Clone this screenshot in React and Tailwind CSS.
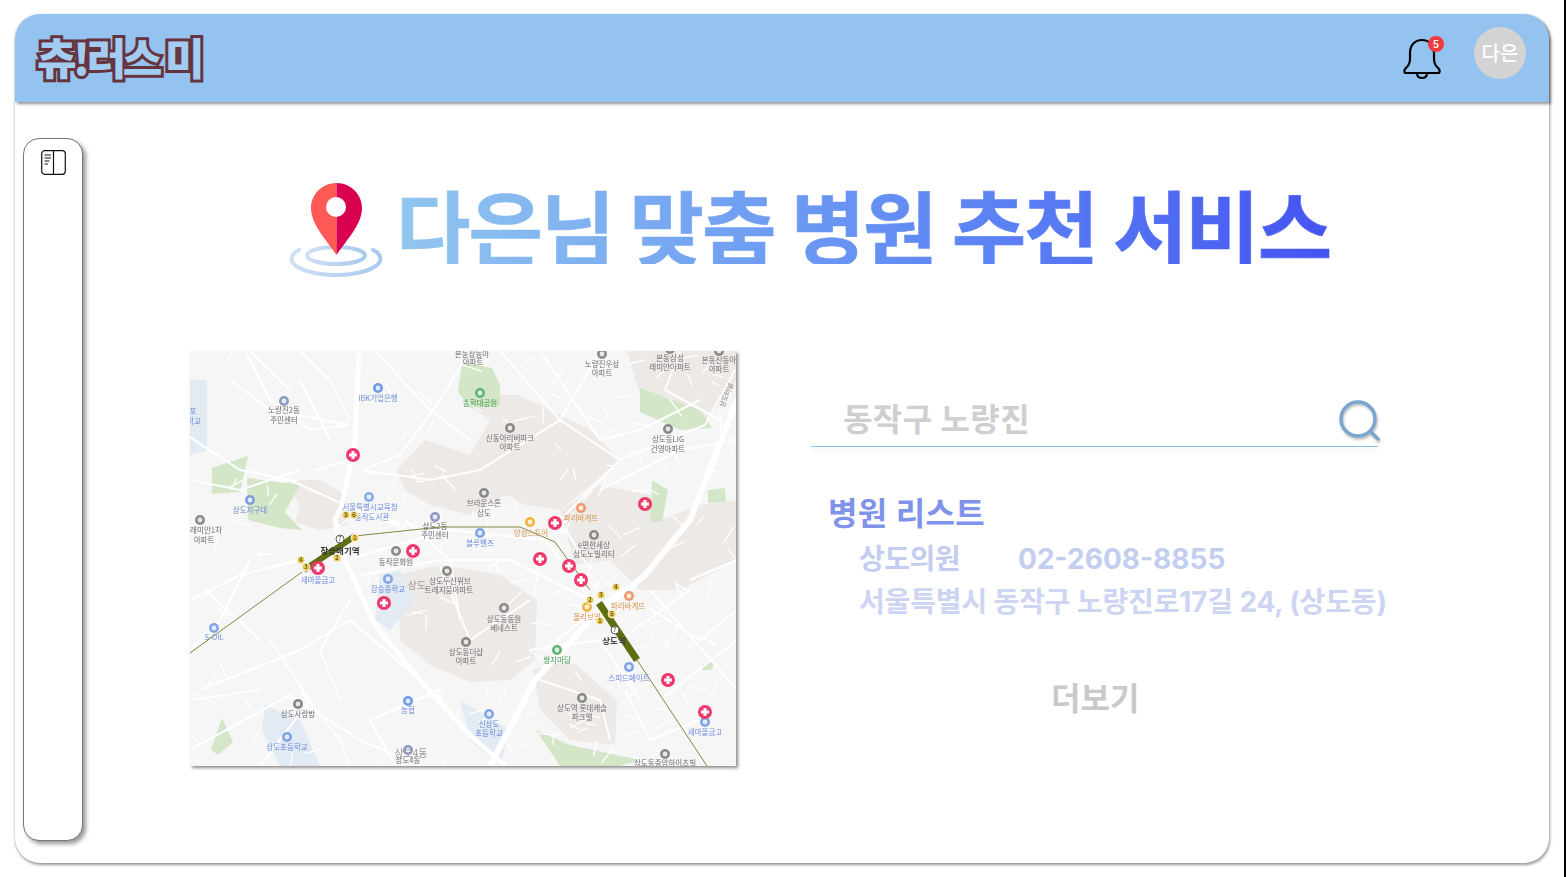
import React from "react";

const KR = '"Noto Sans CJK KR", sans-serif';
const blue = "#6f8cdc", gray = "#6e6e72", orange = "#d99350", green = "#3f9c52";

const labels = [
  ["노량진2동", 284, 410, gray], ["주민센터", 284, 420, gray],
  ["IBK기업은행", 378, 398, blue], ["포", 193, 411, blue], ["학교", 194, 421, blue],
  ["상도지구대", 250, 510, blue], ["서울특별시교육청", 370, 507, blue], ["동작도서관", 372, 517, blue],
  ["상도2동", 435, 526, gray], ["주민센터", 435, 535, gray],
  ["래미안1차", 206, 530, gray], ["아파트", 204, 540, gray],
  ["동작문화원", 396, 562, gray], ["새마을금고", 318, 580, blue], ["장승중학교", 388, 589, blue],
  ["상도두산위브", 450, 581, gray], ["트레지움아파트", 449, 590, gray],
  ["S-OIL", 214, 637, blue], ["상도사랑방", 298, 714, gray], ["상도초등학교", 287, 747, blue],
  ["농협", 408, 710, blue], ["상도4동", 408, 760, gray],
  ["상도동동원", 504, 619, gray], ["베네스트", 504, 628, gray],
  ["상도동더샵", 466, 652, gray], ["아파트", 466, 661, gray],
  ["쌍지마당", 557, 660, green], ["상도역 롯데캐슬", 582, 708, gray], ["파크엘", 582, 717, gray],
  ["신상도", 489, 724, blue], ["초등학교", 489, 733, blue],
  ["상도동중앙하이츠빌", 665, 763, gray], ["새마을금고", 705, 732, blue],
  ["스피드메이트", 629, 678, blue], ["올리브영", 587, 617, orange],
  ["파리바게뜨", 628, 606, orange], ["파리바게뜨", 581, 518, orange],
  ["e편한세상", 594, 545, gray], ["상도노빌리티", 594, 554, gray],
  ["블루핸즈", 480, 543, blue], ["양성스토어", 531, 533, orange],
  ["브라운스톤", 484, 503, gray], ["상도", 484, 513, gray],
  ["신동아리버파크", 510, 438, gray], ["아파트", 510, 447, gray],
  ["송학대공원", 480, 403, green], ["상도동LIG", 668, 439, gray], ["건영아파트", 668, 449, gray],
  ["노량진우성", 602, 364, gray], ["아파트", 602, 373, gray],
  ["본동삼성", 670, 358, gray], ["래미안아파트", 670, 367, gray],
  ["본동신동아", 719, 360, gray], ["아파트", 719, 369, gray],
  ["본동상동아", 472, 354, gray], ["아파트", 473, 362, gray],
];

const pins = [[353,455],[413,551],[318,568],[384,603],[555,523],[645,504],[540,559],[569,566],[581,580],[668,680],[705,712]];
const icons = [
  [284,401,"#8c9bc0"],[378,388,"#6f9be8"],[250,500,"#7c9fd8"],[369,497,"#85aee8"],[435,517,"#8c9bc0"],
  [200,520,"#8a8a8a"],[396,551,"#8a8a8a"],[388,579,"#85a5e8"],[447,571,"#8a8a8a"],[214,628,"#85a5e8"],
  [298,704,"#8a8580"],[287,737,"#7ea4e8"],[408,701,"#6f9be8"],[408,750,"#8c9bc0"],[504,608,"#8a8a8a"],
  [466,642,"#8a8a8a"],[557,650,"#5fb56f"],[582,698,"#8a8a8a"],[489,714,"#85a5e8"],[665,754,"#8a8a8a"],
  [705,722,"#7ea4e8"],[629,667,"#7ea4e8"],[587,607,"#f0b43c"],[629,596,"#ee9a6c"],[581,508,"#ee9a6c"],
  [594,535,"#8a8a8a"],[480,533,"#7ea4e8"],[530,522,"#f0b43c"],[484,493,"#8a8a8a"],[510,428,"#8a8a8a"],
  [480,393,"#5fb56f"],[668,429,"#8a8a8a"],[602,354,"#8a8a8a"],[670,349,"#8a8a8a"],[719,351,"#8a8a8a"],
];
const stations = [
  ["5",346,515,"#e8c64a"],["6",354,515,"#e8c64a"],["7",340,539,"#fff"],["1",355,538,"#e8c64a"],["2",337,558,"#e8c64a"],
  ["4",301,560,"#e8c64a"],["3",306,567,"#e8c64a"],["4",616,587,"#e8c64a"],["3",601,595,"#e8c64a"],["2",590,600,"#e8c64a"],
  ["5",612,614,"#e8c64a"],["1",600,621,"#e8c64a"],["7",615,630,"#fff"],
];
const beige = [
  "283,480 320,480 345,495 347,525 320,530 295,522 300,505",
  "397,470 425,440 470,455 490,420 530,400 590,430 620,460 585,490 560,510 525,505 505,495 470,515 430,505 405,490",
  "460,400 490,395 520,395 560,420 540,430 490,420",
  "627,351 737,351 737,380 705,425 665,420 640,395",
  "560,510 600,485 650,495 660,520 610,560 575,565",
  "397,575 440,565 500,575 537,600 535,660 510,680 470,682 430,665 400,640",
  "533,670 570,660 617,700 615,745 570,740 540,710",
  "610,560 660,520 700,505 737,500 737,560 680,590 640,590",
];
const parks = [
  "462,362 492,368 500,385 500,406 470,408 458,392",
  "212,468 248,456 240,492 212,494",
  "247,478 300,485 285,512 302,530 280,528 248,520",
  "640,388 700,410 712,428 680,430 640,412",
  "652,480 668,490 662,522 650,522",
  "708,490 725,488 726,502 708,503",
  "211,750 222,718 233,742 218,755",
  "536,730 570,745 640,760 620,766 560,766",
  "702,664 714,662 712,670 703,670",
];
const water = [
  "190,380 207,380 207,450 190,455",
  "380,575 400,570 415,600 390,630 375,620",
  "265,705 300,720 320,766 280,766 262,730",
  "460,700 510,730 500,766 470,740",
];
const thick = [
  "359,351 355,440 342,505",
  "342,505 335,520 345,560 375,625 420,680 470,735 505,766",
  "490,766 535,680 590,620 645,575 690,520 737,400",
  "340,505 400,525",
];
const thin = [
  "190,437 240,470 290,480 345,505","190,480 240,490 300,470","190,600 240,575 300,560","250,560 220,620 190,650",
  "245,351 270,400 310,430 350,425","300,351 330,380 350,420","230,380 270,410 350,425","315,470 350,460",
  "375,351 430,410 470,440","470,351 440,400 400,455 362,470","362,470 430,480 480,470 560,420 600,351","500,351 560,420 620,460 705,425 735,370",
  "360,575 440,560 510,560 590,600","345,560 450,530 545,540 590,600","540,351 600,440 640,430 700,400","620,460 560,520 590,570",
  "600,490 680,450 737,440","200,690 300,650 350,620 420,680","190,750 290,695 360,740 420,766","300,690 340,740 350,766",
  "395,766 370,720 440,690","545,650 620,590 700,640 737,610","650,590 737,690","620,640 690,590","660,700 737,640","625,690 650,740 700,720",
  "530,650 600,640 640,700","610,740 600,700 540,680","440,566 470,640 530,600","405,520 450,560 460,620","350,600 320,650 340,700","270,640 310,700 260,766",
  "190,700 260,690","300,380 330,440","680,351 665,390 720,420","690,580 737,560","250,351 290,390","205,590 260,640",
];

const streets = [];
let seed = 7;
const rnd = () => { seed = (seed * 16807) % 2147483647; return seed / 2147483647; };
for (let i = 0; i < 210; i++) {
  const x = 190 + rnd() * 547;
  const y = 351 + rnd() * 415;
  const a = rnd() * Math.PI;
  const l = 8 + rnd() * 14;
  const inEmpty = x < 340 && y > 360 && y < 460 || x > 225 && x < 390 && y > 590 && y < 680;
  if (!inEmpty) streets.push([x, y, x + Math.cos(a) * l, y + Math.sin(a) * l]);
}

function MapPic() {
  return (
    <svg viewBox="190 351 546 415" className="block w-[546px] h-[415px] bg-[#f6f6f7] shadow-[2px_2px_3px_rgba(0,0,0,0.45)] blur-[0.35px]" style={{ fontFamily: KR }}>
      {beige.map((p, i) => <polygon key={i} points={p} fill="#ede9e6" />)}
      {parks.map((p, i) => <polygon key={i} points={p} fill="#d4e6c8" />)}
      {water.map((p, i) => <polygon key={i} points={p} fill="#e2ebf4" />)}
      {streets.map(([a, b, c, d], i) => <line key={i} x1={a} y1={b} x2={c} y2={d} stroke="#fff" strokeWidth="1.300" />)}
      {thin.map((p, i) => <polyline key={i} points={p} fill="none" stroke="#fff" strokeWidth="2" />)}
      {thick.map((p, i) => <polyline key={i} points={p} fill="none" stroke="#fff" strokeWidth={i === 2 ? 6 : 5} />)}
      <polyline points="190,653 302,572" fill="none" stroke="#7d8b3f" strokeWidth="1" />
      <polyline points="355,536 440,527 520,527 555,542 590,590" fill="none" stroke="#7d8b3f" strokeWidth="1" />
      <polyline points="637,660 707,766" fill="none" stroke="#7d8b3f" strokeWidth="1" />
      <polyline points="304,570 355,536" fill="none" stroke="#5e6f10" strokeWidth="6" />
      <polyline points="599,603 637,660" fill="none" stroke="#5e6f10" strokeWidth="7" />
      {icons.map(([x, y, c], i) => (
        <g key={i}><circle cx={x} cy={y} r="5" fill={c} /><circle cx={x} cy={y} r="2.400" fill="#fff" opacity="0.8" /></g>
      ))}
      {labels.map(([t, x, y, c], i) => (
        <text key={i} x={x} y={y + 2.500} fill={c} fontSize="7.500" textAnchor="middle">{t}</text>
      ))}
      <text x="340" y="554" fill="#333" fontSize="8.500" fontWeight="700" textAnchor="middle">장승배기역</text>
      <text x="614" y="644" fill="#444" fontSize="8.500" fontWeight="700" textAnchor="middle">상도역</text>
      <text x="417" y="589" fill="#999" fontSize="10" textAnchor="middle">상도</text>
      <text x="411" y="757" fill="#999" fontSize="10" textAnchor="middle">상도4동</text>
      <text x="726" y="398" fill="#888" fontSize="7" textAnchor="middle" transform="rotate(-68 726 395)">상도터널</text>
      {stations.map(([n, x, y, c], i) => (
        <g key={i}><circle cx={x} cy={y} r="4" fill={c} stroke={c === "#fff" ? "#333" : "#fff"} strokeWidth="0.800" /><text x={x} y={y + 2} fontSize="6" textAnchor="middle" fill="#333">{n}</text></g>
      ))}
      {pins.map(([x, y], i) => (
        <g key={i}>
          <circle cx={x} cy={y} r="7" fill="#f0386b" />
          <path d={`M${x - 1.500} ${y - 4}h3v2.500h2.500v3h-2.500v2.500h-3v-2.500h-2.500v-3h2.500z`} fill="#fff" />
        </g>
      ))}
    </svg>
  );
}

function Pin() {
  return (
    <svg viewBox="285 180 100 100" className="w-[100px] h-[100px] shrink-0">
      <defs>
        <linearGradient id="ring" x1="0" x2="1" y1="0" y2="0">
          <stop offset="0" stopColor="#cfe0f4" />
          <stop offset="1" stopColor="#a9c8ee" />
        </linearGradient>
      </defs>
      <ellipse cx="336" cy="255.500" rx="29" ry="8.500" fill="none" stroke="url(#ring)" strokeWidth="4" />
      <path d="M299 250c-7 3-8 8-7 11 3 8 22 14 44 14s41-6 44-14c1-3 0-8-7-11" fill="none" stroke="url(#ring)" strokeWidth="4" strokeLinecap="round" />
      <path d="M336.500 183c-14 0-25.500 11-25.500 25 0 16 14 30 25.500 47z" fill="#ff5a55" />
      <path d="M336.500 183c14 0 25.500 11 25.500 25 0 16-14 30-25.500 47z" fill="#d8004f" />
      <circle cx="336" cy="207" r="10" fill="#fff" />
    </svg>
  );
}

export default function App() {
  return (
    <div className="w-[1566px] h-[877px] bg-white overflow-hidden flex" style={{ fontFamily: 'Inter, "Noto Sans CJK KR", sans-serif' }}>
      <div className="flex-1 pt-[14px] pl-[15px]">
        <div className="w-[1534px] h-[849px] rounded-[25px] bg-white flex flex-col shadow-[1px_2px_3px_rgba(0,0,0,0.4),-1px_0_2px_rgba(0,0,0,0.1)]">
          <header className="h-[88px] shrink-0 rounded-t-[25px] bg-[#94c3ef] shadow-[2px_2px_3px_rgba(0,0,0,0.42)] flex items-center justify-between pl-[22px] pr-[23px]">
            <div className="text-[43px] leading-none font-black text-[#a3ccf1] tracking-[-3.500px] [-webkit-text-stroke:6px_#66343f] [paint-order:stroke_fill] mt-[-4px]" style={{ fontFamily: KR }}>
              츄!러스 미
            </div>
            <div className="flex items-center gap-[32px] mt-[-10px]">
              <div className="relative w-[40px] h-[44px] mt-[10px]">
                <svg viewBox="0 0 40 44" className="w-[40px] h-[44px]" fill="none" stroke="#000" strokeWidth="2.200" strokeLinejoin="round" strokeLinecap="round">
                  <path d="M8 17c0-8 5-13 12-13s12 5 12 13v6c0 5 2 7 5 10 1 2 1 4-1 4H4c-2 0-2-2-1-4 3-3 5-5 5-10z" />
                  <path d="M15 37c0 3 2 5 5 5s5-2 5-5" />
                </svg>
                <span className="absolute top-[0px] right-[-2px] w-[16px] h-[16px] rounded-full bg-[#ee3b3e] text-white text-[10px] font-semibold flex items-center justify-center">5</span>
              </div>
              <div className="w-[52px] h-[52px] rounded-full bg-[#d3d3d3] text-white text-[20px] font-medium flex items-center justify-center" style={{ fontFamily: KR }}>다은</div>
            </div>
          </header>
          <div className="flex flex-1">
            <aside className="w-[60px] h-[703px] mt-[36px] ml-[8px] shrink-0 rounded-[16px] bg-white border border-[#77747a] shadow-[3px_3px_4px_rgba(0,0,0,0.4)] flex justify-center pt-[11px]">
              <svg viewBox="0 0 25 25" className="w-[25px] h-[25px]" fill="none" stroke="#111" strokeWidth="1.200">
                <rect x="0.700" y="0.700" width="23.600" height="23.600" rx="3" />
                <path d="M12.500 0.700v23.600M3.500 5h6.500M3.500 8h6.500M3.500 11h5M3.500 14h3.500" />
              </svg>
            </aside>
            <main className="flex-1 flex flex-col pl-[207px]">
              <div className="flex items-center mt-[78px] h-[100px] pr-[200px] ml-[-5px]">
                <Pin />
                <h1 className="ml-[11px] mt-[-14px] text-[81px] leading-none font-bold tracking-[-2.100px] whitespace-nowrap bg-linear-to-r from-[#92c6ee] to-[#4653f2] bg-clip-text text-transparent [-webkit-text-stroke:0.6px_transparent]" style={{ fontFamily: KR }}>
                  다은님 맞춤 병원 추천 서비스
                </h1>
              </div>
              <div className="flex mt-[71px] ml-[-100px]">
                <MapPic />
                <section className="ml-[75px] w-[567px] flex flex-col">
                  <div className="relative h-[96px]">
                    <div className="h-[95px] flex items-end pl-[32px] pb-[6px]">
                      <span className="text-[32px] font-bold leading-[40px] text-[#cfcfd2] tracking-[0.4px]">동작구 노량진</span>
                    </div>
                    <div className="h-[1px] bg-[#8fc0ec] shadow-[0_3px_3px_rgba(0,0,0,0.1)]" />
                    <svg viewBox="0 0 44 44" className="absolute right-[-5px] top-[48px] w-[44px] h-[44px] drop-shadow-[1px_2px_1px_rgba(0,0,0,0.25)]" fill="none" stroke="#7ba6d0" strokeWidth="3.500" strokeLinecap="round">
                      <circle cx="19" cy="20" r="17" />
                      <path d="M32 33l7 7" />
                    </svg>
                  </div>
                  <h2 className="mt-[47px] ml-[17px] text-[32px] leading-[40px] font-bold text-[#7f93ea] tracking-[0.4px]">병원 리스트</h2>
                  <div className="ml-[48px] mt-[7px] flex gap-[58px] text-[28px] leading-[36px] font-bold text-[#c3cdf0]">
                    <span className="tracking-[-0.5px]">상도의원</span>
                    <span>02-2608-8855</span>
                  </div>
                  <p className="ml-[48px] mt-[7px] text-[28px] leading-[36px] font-bold text-[#cdd5f2] whitespace-nowrap tracking-[-0.150px]">서울특별시 동작구 노량진로17길 24, (상도동)</p>
                  <button className="mt-[59px] ml-[240px] w-fit text-[32px] leading-[40px] font-semibold text-[#c9c9c9]">더보기</button>
                </section>
              </div>
            </main>
          </div>
        </div>
      </div>
      <div className="w-[2px] h-full bg-black shrink-0" />
    </div>
  );
}
